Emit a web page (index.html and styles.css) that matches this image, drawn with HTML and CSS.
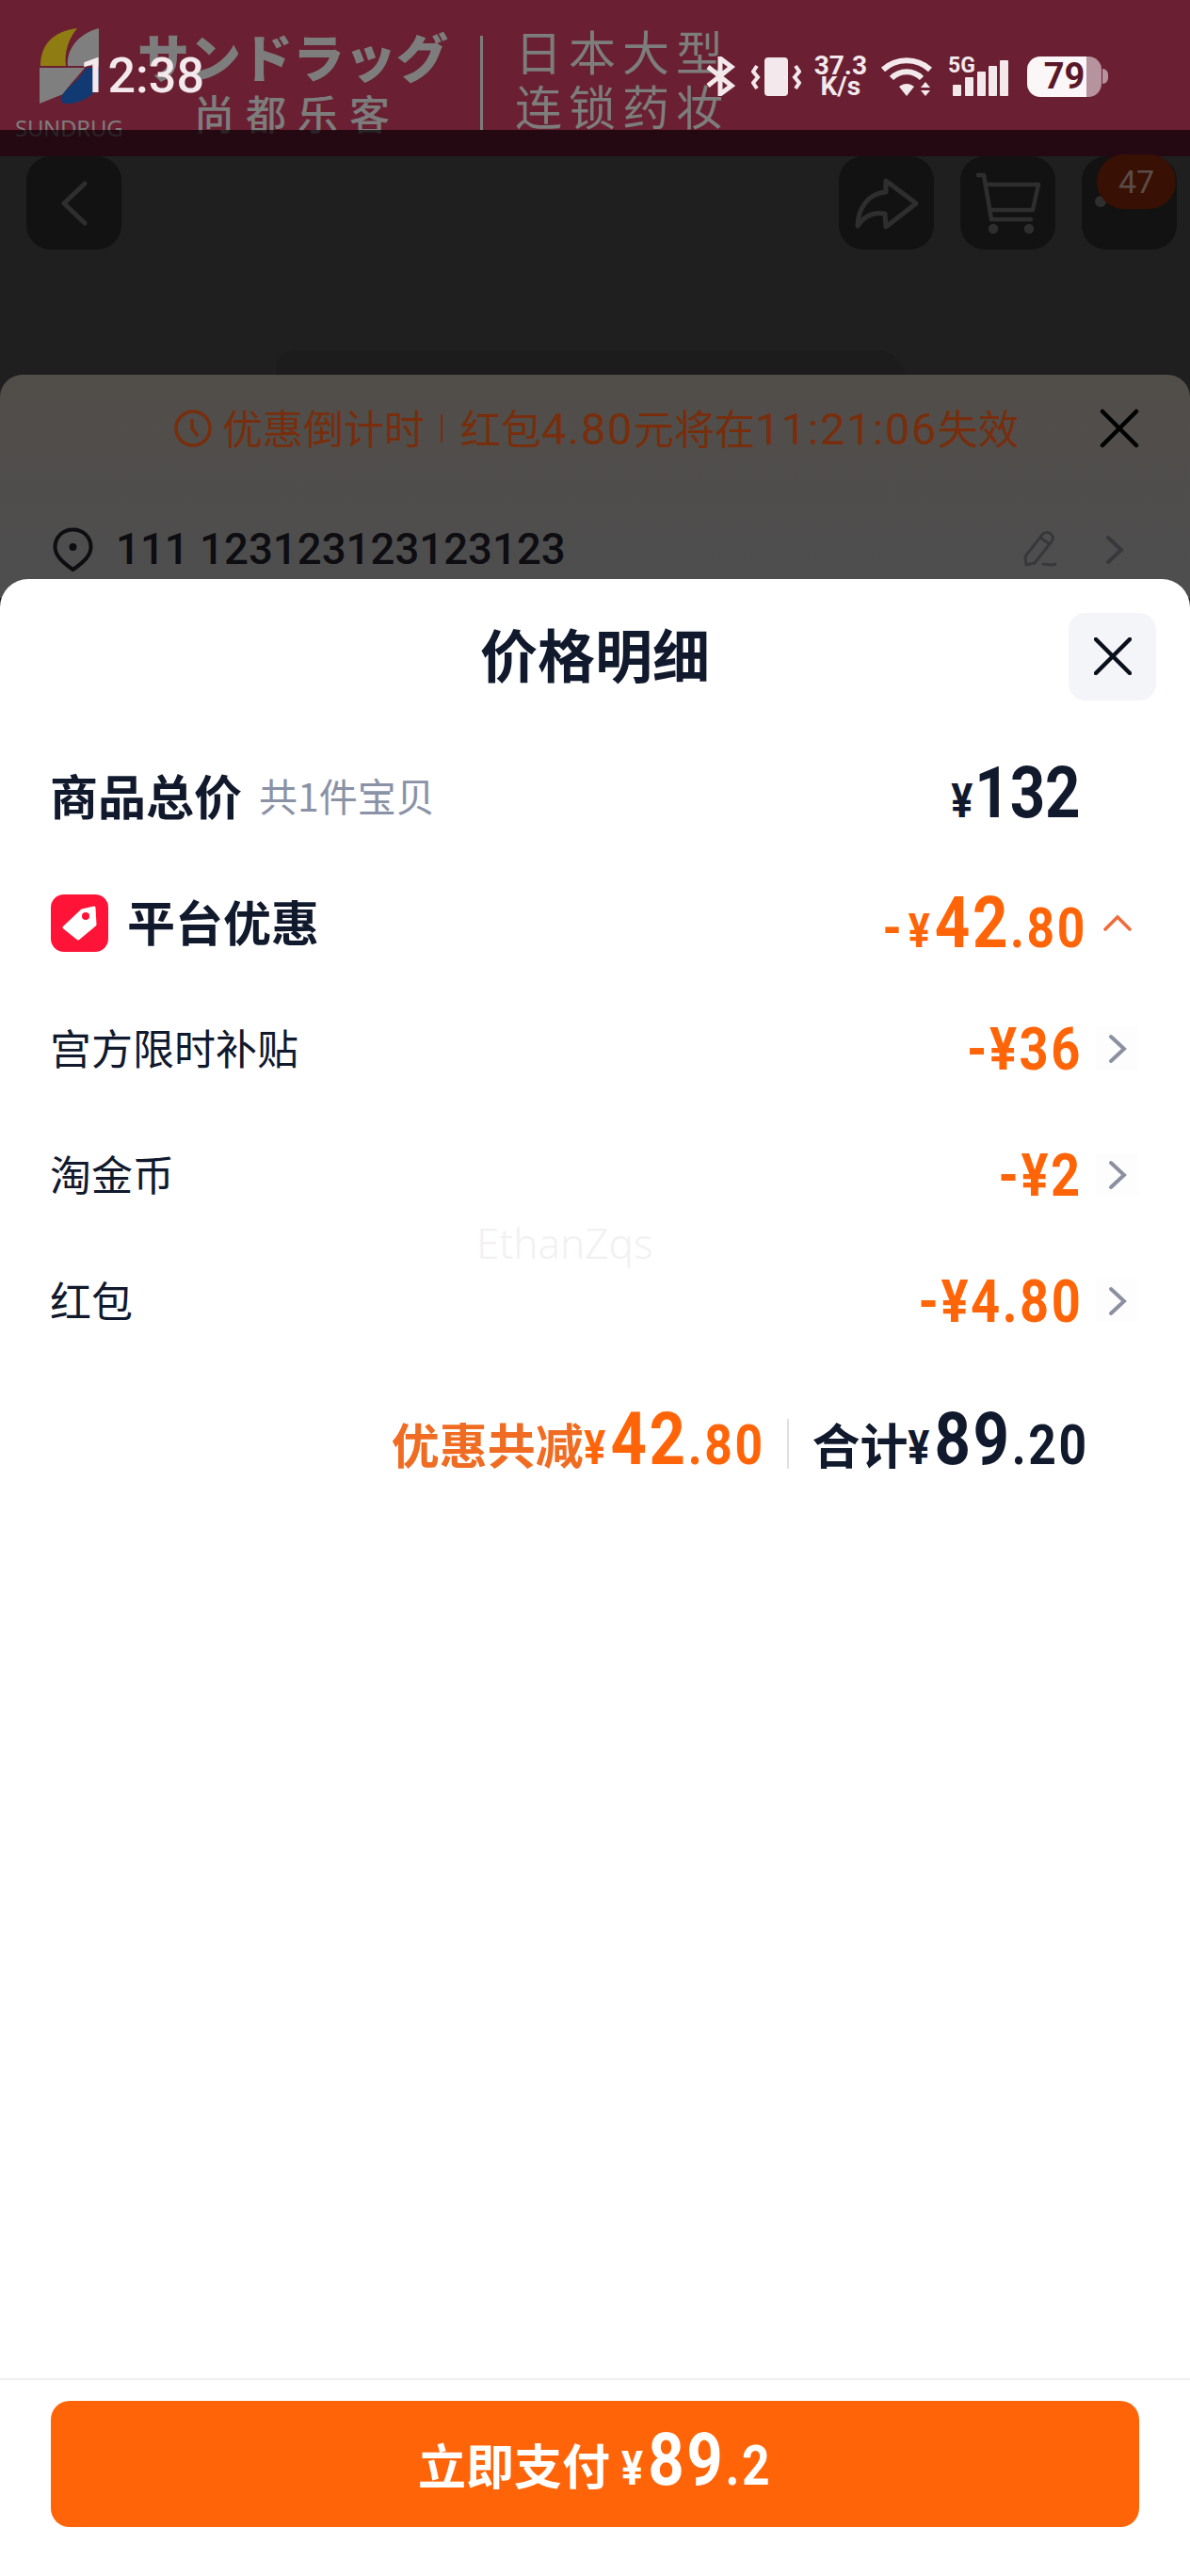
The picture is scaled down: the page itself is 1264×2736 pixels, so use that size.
FILE: index.html
```html
<!DOCTYPE html>
<html lang="zh-CN">
<head>
    <meta charset="UTF-8">
    <meta name="viewport" content="width=device-width, initial-scale=1.0">
    <title>价格明细</title>
    <link rel="stylesheet" href="styles.css">
</head>
<body>
    <div class="page">
        <div class="banner">
            <div class="logo">
                <svg class="logo-mark" width="63" height="80" viewBox="0 0 63 80">
                    <path d="M1 40C1 18 14 3 40 0C31 11 26 25 28 40Z" fill="#8f7c12"/>
                    <path d="M63 0V40H30C28 24 40 6 63 0Z" fill="#7f7f7f"/>
                    <path d="M0 42H48C40 52 30 62 25 70L0 80Z" fill="#7f7f7f"/>
                    <path d="M50 42H63V60C58 72 44 80 29 80C20 80 22 72 28 66C36 58 44 52 50 42Z" fill="#123a72"/>
                </svg>
                <span class="logo-name">SUNDRUG</span>
            </div>
            <div class="brand">
                <div class="brand-jp">サンドラッグ</div>
                <div class="brand-cn">尚都乐客</div>
            </div>
            <div class="brand-line"></div>
            <div class="slogan">
                <div>日本大型</div>
                <div>连锁药妆</div>
            </div>
            <div class="banner-shade"></div>
            <div class="statusbar">
                <span class="time">12:38</span>
                <div class="status-icons">
                    <svg width="31" height="42" viewBox="0 0 31 42" fill="none" stroke="#f3e9ed" stroke-width="5">
                        <path d="M2 11L27 31L15 40V2L27 11L2 31"/>
                    </svg>
                    <svg width="53" height="41" viewBox="0 0 53 41" class="ic-vibrate">
                        <rect x="14" y="0" width="25" height="41" rx="4" fill="#f3e9ed"/>
                        <path d="M6 9L2 15L7 21L2 27L6 33M47 9L51 15L46 21L51 27L47 33" fill="none" stroke="#f3e9ed" stroke-width="4"/>
                    </svg>
                    <div class="speed">
                        <span>37.3</span>
                        <span>K/s</span>
                    </div>
                    <svg width="58" height="42" viewBox="0 0 58 42" class="ic-wifi">
                        <path d="M3 14C17 1 39 1 53 14" fill="none" stroke="#f3e9ed" stroke-width="6"/>
                        <path d="M12 23C21 14 35 14 44 23" fill="none" stroke="#f3e9ed" stroke-width="6"/>
                        <path d="M20 32C25 28 31 28 36 32L28 42Z" fill="#f3e9ed"/>
                        <path d="M48 27L53 33H43ZM48 42L43 36H53Z" fill="#f3e9ed"/>
                    </svg>
                    <div class="signal">
                        <span class="signal-label">5G</span>
                        <svg width="60" height="38" viewBox="0 0 60 38" fill="#f3e9ed">
                            <rect x="0" y="26" width="9" height="12" rx="1"/>
                            <rect x="13" y="18" width="9" height="20" rx="1"/>
                            <rect x="26" y="12" width="9" height="26" rx="1"/>
                            <rect x="38" y="6" width="9" height="32" rx="1"/>
                            <rect x="50" y="0" width="9" height="38" rx="1"/>
                        </svg>
                    </div>
                    <div class="battery">
                        <span class="battery-body">79</span>
                        <span class="battery-nub"></span>
                    </div>
                </div>
            </div>
        </div>

        <div class="topnav">
            <div class="nav-btn">
                <svg width="29" height="48" viewBox="0 0 29 48" fill="none" stroke="#2e2e2e" stroke-width="5" stroke-linecap="round" stroke-linejoin="round">
                    <path d="M26 3L4 24L26 45"/>
                </svg>
            </div>
            <div class="nav-right">
                <div class="nav-btn">
                    <svg width="68" height="54" viewBox="0 0 68 54" fill="none" stroke="#2e2e2e" stroke-width="5" stroke-linejoin="round" stroke-linecap="round">
                        <path d="M33 3L65 27L33 52L32 38C20 36 10 40 3 51C3 32 15 16 33 15Z"/>
                    </svg>
                </div>
                <div class="nav-btn">
                    <svg width="68" height="66" viewBox="0 0 68 66" fill="none" stroke="#2e2e2e" stroke-width="4.5" stroke-linejoin="round" stroke-linecap="round">
                        <path d="M2 3H8L16 50H58"/>
                        <path d="M10 13H66L60 40H15"/>
                        <circle cx="18" cy="60" r="3" fill="#2e2e2e"/>
                        <circle cx="56" cy="60" r="3" fill="#2e2e2e"/>
                    </svg>
                </div>
                <div class="nav-btn">
                    <span class="nav-dot"></span>
                    <span class="nav-badge">47</span>
                </div>
            </div>
        </div>

        <div class="under-sheet">
            <div class="countdown">
                <svg width="40" height="40" viewBox="0 0 40 40" fill="none" stroke="#782e0c" stroke-width="3.5">
                    <circle cx="20" cy="20" r="18"/>
                    <path d="M19 10V20L25 28"/>
                </svg>
                <span class="countdown-title">优惠倒计时</span>
                <span class="countdown-line"></span>
                <span class="countdown-text">红包<i>4.80</i>元将在<i>11:21:06</i>失效</span>
                <svg class="countdown-close" width="42" height="42" viewBox="0 0 42 42" fill="none" stroke="#000" stroke-width="4.5" stroke-linecap="round">
                    <path d="M3 3L39 39M39 3L3 39"/>
                </svg>
            </div>
            <div class="address">
                <svg width="43" height="47" viewBox="0 0 43 47" fill="none" stroke="#0d0d12" stroke-width="4">
                    <path d="M21.5 45C10 37 2.5 30 2.500 21C2.500 10 11 2.500 21.500 2.500S40.500 10 40.500 21C40.500 30 33 37 21.500 45Z" stroke-linejoin="round"/>
                    <circle cx="21.500" cy="21" r="4" fill="#0d0d12" stroke="none"/>
                </svg>
                <span class="address-text">111 123123123123123</span>
                <svg class="address-edit" width="38" height="38" viewBox="0 0 38 38" fill="none" stroke="#38383c" stroke-width="3" stroke-linejoin="round">
                    <path d="M3 27L21 4C23 1 27 1 30 3C33 5 33 9 31 11L13 34L4 36Z"/>
                    <path d="M19 7L29 14M21 36C25 33 28 38 36 35"/>
                </svg>
                <svg class="address-arrow" width="20" height="32" viewBox="0 0 20 32" fill="none" stroke="#38383c" stroke-width="4" stroke-linecap="round">
                    <path d="M3 3L17 16L3 29"/>
                </svg>
            </div>
        </div>

        <div class="sheet">
            <div class="sheet-head">
                <h1>价格明细</h1>
                <div class="close-btn">
                    <svg width="40" height="40" viewBox="0 0 40 40" fill="none" stroke="#0a0f1c" stroke-width="4.5" stroke-linecap="round">
                        <path d="M2 2L38 38M38 2L2 38"/>
                    </svg>
                </div>
            </div>

            <div class="row row-total">
                <div class="row-label">
                    <strong>商品总价</strong>
                    <span class="muted">共1件宝贝</span>
                </div>
                <div class="price dark"><span class="cur">¥</span><span class="big">132</span></div>
            </div>

            <div class="row row-platform">
                <div class="row-label">
                    <svg class="tag" width="61" height="61" viewBox="0 0 61 61">
                        <rect width="61" height="61" rx="14" fill="#ff1438"/>
                        <path d="M33 17L46 14L47 32L29 47L14 35Z" fill="#fff" stroke="#fff" stroke-width="3" stroke-linejoin="round"/>
                        <circle cx="37" cy="23" r="4" fill="#ff1438"/>
                    </svg>
                    <strong>平台优惠</strong>
                </div>
                <div class="price orange"><span class="minus">-</span><span class="cur">¥</span><span class="big">42</span><span class="dec">.80</span></div>
                <svg class="up" width="30" height="18" viewBox="0 0 30 18" fill="none" stroke="#f26a3a" stroke-width="3.500" stroke-linecap="round">
                    <path d="M2 16L15 3L28 16"/>
                </svg>
            </div>

            <div class="row">
                <div class="row-label">宫方限时补贴</div>
                <div class="price orange price-sub">-¥36</div>
                <span class="arrow"><svg width="20" height="32" viewBox="0 0 20 32" fill="none" stroke="#8b90a0" stroke-width="4" stroke-linecap="round"><path d="M3 3L17 16L3 29"/></svg></span>
            </div>
            <div class="row">
                <div class="row-label">淘金币</div>
                <div class="price orange price-sub">-¥2</div>
                <span class="arrow"><svg width="20" height="32" viewBox="0 0 20 32" fill="none" stroke="#8b90a0" stroke-width="4" stroke-linecap="round"><path d="M3 3L17 16L3 29"/></svg></span>
            </div>
            <div class="row">
                <div class="row-label">红包</div>
                <div class="price orange price-sub">-¥4.80</div>
                <span class="arrow"><svg width="20" height="32" viewBox="0 0 20 32" fill="none" stroke="#8b90a0" stroke-width="4" stroke-linecap="round"><path d="M3 3L17 16L3 29"/></svg></span>
            </div>

            <div class="summary">
                <span class="sum-label orange-soft">优惠共减</span>
                <div class="price orange sum-price"><span class="cur">¥</span><span class="big">42</span><span class="dec">.80</span></div>
                <span class="summary-line"></span>
                <span class="sum-label">合计</span>
                <div class="price dark sum-price"><span class="cur">¥</span><span class="big">89</span><span class="dec">.20</span></div>
            </div>

            <div class="watermark">EthanZqs</div>

            <div class="footer">
                <div class="pay-btn">
                    <span class="sum-label">立即支付</span>
                    <div class="price pay-price"><span class="cur">¥</span><span class="big">89</span><span class="dec">.2</span></div>
                </div>
            </div>
        </div>
    </div>
</body>
</html>
```

FILE: styles.css
```css
* {
    box-sizing: border-box;
}
html, body {
    margin: 0;
    padding: 0;
}
body {
    font-family: "Noto Sans CJK SC", Roboto, sans-serif;
    color: #11192d;
    background: #1f1f1f;
}
.page {
    width: 1264px;
    height: 2736px;
    display: flex;
    flex-direction: column;
    overflow: hidden;
}

/* banner + status bar */
.banner {
    position: relative;
    height: 166px;
    flex: none;
    display: flex;
    align-items: flex-start;
    background: #6a2032;
    color: #7d7d7d;
    overflow: hidden;
}
.logo {
    width: 146px;
    padding: 30px 0 0 16px;
    display: flex;
    flex-direction: column;
}
.logo-mark {
    margin-left: 26px;
}
.logo-name {
    font-family: "Noto Sans", sans-serif;
    font-size: 24px;
    line-height: 32px;
    margin-top: 10px;
    letter-spacing: -0.3px;
}
.brand {
    width: 329px;
    padding-top: 22px;
}
.brand-jp {
    font-size: 55px;
    line-height: 72px;
    font-weight: 900;
    white-space: nowrap;
}
.brand-cn {
    font-size: 43px;
    font-weight: 500;
    line-height: 50px;
    letter-spacing: 12px;
    margin: 0 0 0 60px;
    white-space: nowrap;
}
.brand-line {
    width: 3px;
    height: 100px;
    margin: 38px 0 0 35px;
    background: #7d7d7d;
}
.slogan {
    margin: 24px 0 0 34px;
    font-size: 50px;
    line-height: 58px;
    letter-spacing: 7px;
}
.banner-shade {
    position: absolute;
    left: 0;
    right: 0;
    top: 138px;
    height: 28px;
    background: rgba(10, 0, 5, 0.72);
}
.statusbar {
    position: absolute;
    left: 85px;
    right: 87px;
    top: 59px;
    height: 44px;
    display: flex;
    justify-content: space-between;
    align-items: center;
    color: #f3e9ed;
}
.time {
    font-family: Roboto, sans-serif;
    font-size: 52px;
    font-weight: 500;
    line-height: 44px;
}
.status-icons {
    display: flex;
    align-items: center;
    gap: 14px;
}
.ic-vibrate {
    margin-left: 3px;
}
.speed {
    display: flex;
    flex-direction: column;
    align-items: center;
    font-family: Roboto, sans-serif;
    font-weight: 700;
    font-size: 28px;
    line-height: 22px;
}
.signal {
    position: relative;
    width: 65px;
    height: 42px;
    display: flex;
    justify-content: flex-end;
    align-items: flex-end;
}
.signal-label {
    position: absolute;
    left: 0;
    top: -2px;
    font-family: Roboto, sans-serif;
    font-weight: 700;
    font-size: 23px;
    line-height: 24px;
}
.battery {
    display: flex;
    align-items: center;
    margin-left: 5px;
}
.battery-body {
    width: 79px;
    height: 43px;
    border-radius: 14px;
    background: linear-gradient(90deg, #fbf6f8 0 80%, #b7929f 80% 100%);
    color: #5a1728;
    font-family: Roboto, sans-serif;
    font-weight: 700;
    font-size: 38px;
    line-height: 43px;
    text-align: center;
    white-space: nowrap;
}
.battery-nub {
    width: 6px;
    height: 16px;
    margin-left: 1px;
    border-radius: 0 8px 8px 0;
    background: #b7929f;
}

/* page behind the sheet */
.topnav {
    position: relative;
    height: 232px;
    flex: none;
    display: flex;
    justify-content: space-between;
    align-items: flex-start;
    padding: 0 14px 0 28px;
    background: #1f1f1f;
}
.topnav::after {
    content: "";
    position: absolute;
    left: 293px;
    width: 668px;
    top: 206px;
    height: 40px;
    border-radius: 20px 30px 0 0;
    background: #1c1c1c;
}
.nav-right {
    display: flex;
    gap: 28px;
}
.nav-btn {
    position: relative;
    width: 101px;
    height: 99px;
    border-radius: 26px;
    background: #121212;
    display: flex;
    align-items: center;
    justify-content: center;
}
.nav-badge {
    position: absolute;
    right: 1px;
    top: -2px;
    width: 84px;
    height: 58px;
    border-radius: 29px;
    background: #391004;
    color: #5a4c48;
    font-family: Roboto, sans-serif;
    font-size: 34px;
    line-height: 58px;
    text-align: center;
}
.nav-dot {
    position: absolute;
    left: 14px;
    top: 42px;
    width: 12px;
    height: 12px;
    border-radius: 50%;
    background: #2e2e2e;
}
.under-sheet {
    position: relative;
    z-index: 1;
    flex: none;
    height: 237px;
    margin-bottom: -20px;
    border-radius: 24px 24px 0 0;
    background: linear-gradient(180deg, #514d49, #4e4e4f);
    padding: 0 54px 0 56px;
}
.countdown {
    height: 114px;
    padding-left: 129px;
    display: flex;
    align-items: center;
    color: #782e0c;
    font-size: 43px;
}
.countdown-title,
.countdown-text {
    margin-bottom: 4px;
}
.countdown-title {
    margin-left: 11px;
}
.countdown-line {
    width: 2px;
    height: 30px;
    margin: 0 19px 0 17px;
    background: #782e0c;
}
.countdown-text {
    white-space: nowrap;
}
.countdown-text i {
    font-style: normal;
    font-family: Roboto, sans-serif;
    font-size: 47px;
    letter-spacing: 1.6px;
}
.countdown-close {
    margin-left: auto;
}
.address {
    height: 103px;
    display: flex;
    align-items: flex-start;
    padding-top: 48px;
}
.address-text {
    margin-left: 24px;
    font-family: Roboto, sans-serif;
    font-size: 45.6px;
    font-weight: 500;
    line-height: 47px;
    color: #0d0d12;
}
.address-edit {
    margin: 4px 0 0 auto;
}
.address-arrow {
    margin: 8px 16px 0 50px;
}

/* price sheet */
.sheet {
    position: relative;
    z-index: 2;
    flex: 1;
    display: flex;
    flex-direction: column;
    border-radius: 30px 30px 0 0;
    background: #fff;
}
.sheet-head {
    height: 164px;
    flex: none;
    display: grid;
    grid-template-columns: 1fr auto 1fr;
    align-items: center;
    padding-right: 36px;
}
.sheet-head h1 {
    grid-column: 2;
    margin: 0 0 7px;
    font-size: 61px;
    line-height: 80px;
    font-weight: 700;
    padding-left: 36px;
}
.close-btn {
    grid-column: 3;
    justify-self: end;
    width: 93px;
    height: 93px;
    border-radius: 18px;
    background: #f4f5f9;
    display: flex;
    align-items: center;
    justify-content: center;
}
.row {
    height: 134px;
    flex: none;
    display: flex;
    align-items: center;
    padding: 0 54px 0 53px;
    font-size: 44px;
}
.row-label {
    display: flex;
    align-items: center;
    margin: 0 auto 5px 0;
}
.row-label strong {
    font-size: 51px;
    font-weight: 700;
}
.row-label .muted {
    margin-left: 18px;
    font-size: 41px;
    color: #8a92a6;
}
.tag {
    margin: 5px 20px 0 1px;
}

/* DIN style digits: Roboto squeezed, its box stays wide so blocks hold it in by margin */
.price {
    display: flex;
    align-items: baseline;
    font-family: Roboto, sans-serif;
    font-weight: 700;
    line-height: 1;
    white-space: nowrap;
    transform: scaleX(0.86);
    transform-origin: right center;
}
.orange {
    color: #ff6508;
}
.orange-soft {
    color: #f06c22;
}
.dark {
    color: #11192d;
}
.cur {
    font-size: 50px;
    margin-right: 6px;
}
.big {
    font-size: 76px;
    letter-spacing: 2px;
}
.dec {
    font-size: 60px;
    letter-spacing: 3px;
}
.minus {
    font-size: 60px;
    margin-right: 8px;
}
.row-total .price {
    margin: 0 62px 8px 0;
}
.row-total .cur {
    margin-right: 2px;
}
.row-total .big {
    letter-spacing: 0;
}
.row-platform .price {
    margin: 0 17px 0 0;
}
.row-platform .big {
    letter-spacing: 3px;
}
.up {
    margin-right: 8px;
}
.price-sub {
    font-size: 63px;
    letter-spacing: 3px;
    margin: 0 14px 0 0;
}
.arrow {
    width: 46px;
    height: 46px;
    display: flex;
    align-items: center;
    justify-content: center;
    background: #fdfdfd;
}
.summary {
    flex: none;
    height: 134px;
    margin-top: 17px;
    padding: 0 107px 0 0;
    display: flex;
    justify-content: flex-end;
    align-items: baseline;
}
.sum-label {
    font-size: 51px;
    font-weight: 700;
    line-height: 134px;
}
.sum-price {
    margin-left: -31px;
}
.sum-price .big,
.pay-price .big {
    font-size: 78px;
    letter-spacing: 3px;
}
.summary-line {
    align-self: center;
    width: 2px;
    height: 53px;
    margin: 0 24px;
    background: #e0e0e0;
}
.watermark {
    position: absolute;
    left: 506px;
    top: 675px;
    font-family: "Noto Sans", sans-serif;
    font-size: 44px;
    font-weight: 300;
    color: #f1f1f3;
}
.footer {
    margin-top: auto;
    height: 210px;
    flex: none;
    border-top: 2px solid #eeeeee;
    padding: 22px 54px 0;
}
.pay-btn {
    height: 134px;
    border-radius: 20px;
    background: #ff6508;
    color: #fff;
    display: flex;
    justify-content: center;
    align-items: baseline;
}
.pay-price {
    margin-left: -14px;
}
```
